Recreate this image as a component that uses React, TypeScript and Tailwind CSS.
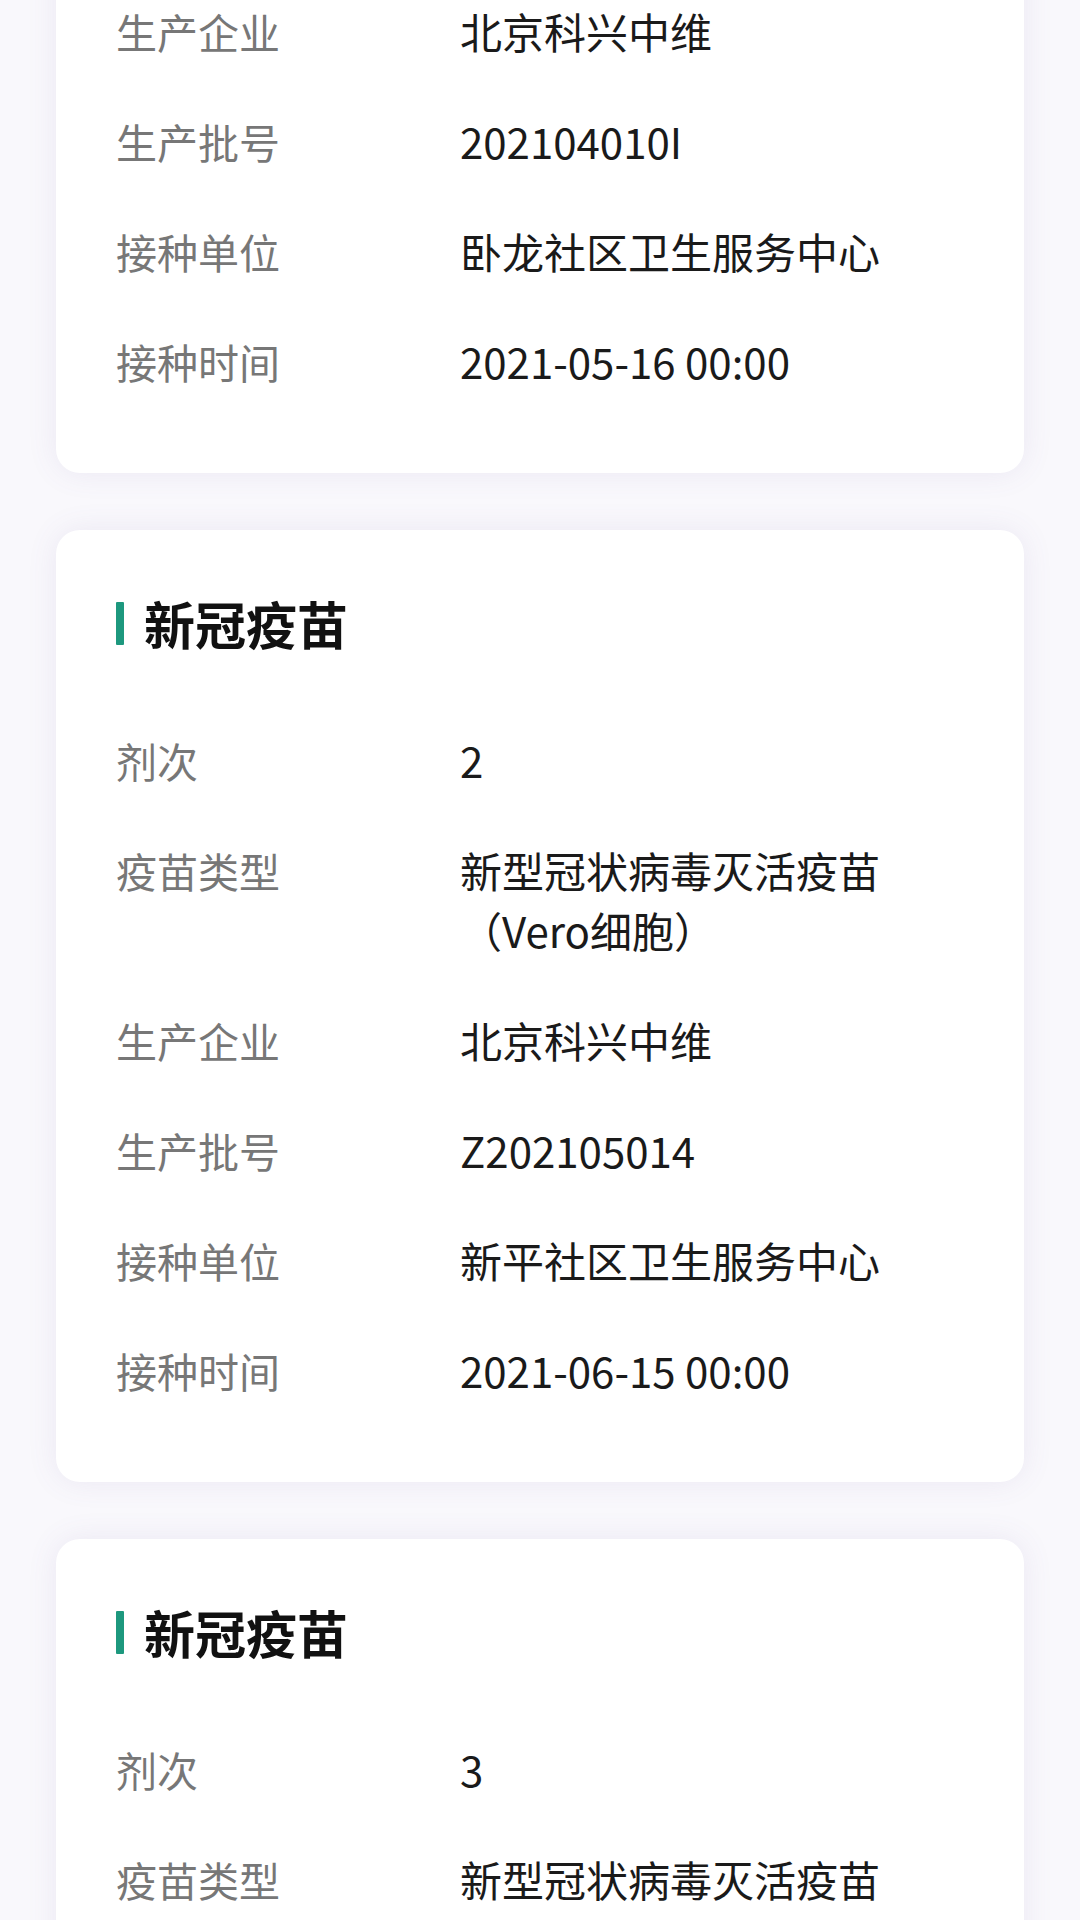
import React from "react";

type Row = { label: string; value: string };
type Record = { title: string; rows: Row[] };

const FONT = { fontFamily: '"Noto Sans CJK SC", "Noto Sans", sans-serif' };

const records: Record[] = [
  {
    title: "新冠疫苗",
    rows: [
      { label: "剂次", value: "1" },
      { label: "疫苗类型", value: "新型冠状病毒灭活疫苗（Vero细胞）" },
      { label: "生产企业", value: "北京科兴中维" },
      { label: "生产批号", value: "202104010I" },
      { label: "接种单位", value: "卧龙社区卫生服务中心" },
      { label: "接种时间", value: "2021-05-16 00:00" },
    ],
  },
  {
    title: "新冠疫苗",
    rows: [
      { label: "剂次", value: "2" },
      { label: "疫苗类型", value: "新型冠状病毒灭活疫苗（Vero细胞）" },
      { label: "生产企业", value: "北京科兴中维" },
      { label: "生产批号", value: "Z202105014" },
      { label: "接种单位", value: "新平社区卫生服务中心" },
      { label: "接种时间", value: "2021-06-15 00:00" },
    ],
  },
  {
    title: "新冠疫苗",
    rows: [
      { label: "剂次", value: "3" },
      { label: "疫苗类型", value: "新型冠状病毒灭活疫苗（Vero细胞）" },
    ],
  },
];

function RecordCard({ record }: { record: Record }) {
  return (
    <div className="bg-white rounded-[24px] shadow-[0_0_30px_rgba(110,90,160,0.10)] pt-[57px] pb-[82px] px-[60px]">
      <div className="flex items-center h-[72px]">
        <span className="w-[8px] h-[43px] bg-[#1d987e] rounded-[1px]" />
        <span className="ml-[20px] text-[51px] leading-[72px] font-bold text-[#111111]">
          {record.title}
        </span>
      </div>
      <div className="mt-[71px] flex flex-col gap-[50px]">
        {record.rows.map((row, i) => (
          <div key={i} className="flex items-start leading-[60px]">
            <span className="w-[344px] shrink-0 text-[41px] text-[#777777]">{row.label}</span>
            <span className="w-[430px] text-[42px] text-[#1a1a1a]">{row.value}</span>
          </div>
        ))}
      </div>
    </div>
  );
}

export default function App() {
  return (
    <div className="h-[1920px] w-[1080px] overflow-hidden bg-[#f9f8fc]" style={FONT}>
      <div className="-mt-[479px] px-[56px] flex flex-col gap-[57px]">
        {records.map((r, i) => (
          <RecordCard key={i} record={r} />
        ))}
      </div>
    </div>
  );
}
